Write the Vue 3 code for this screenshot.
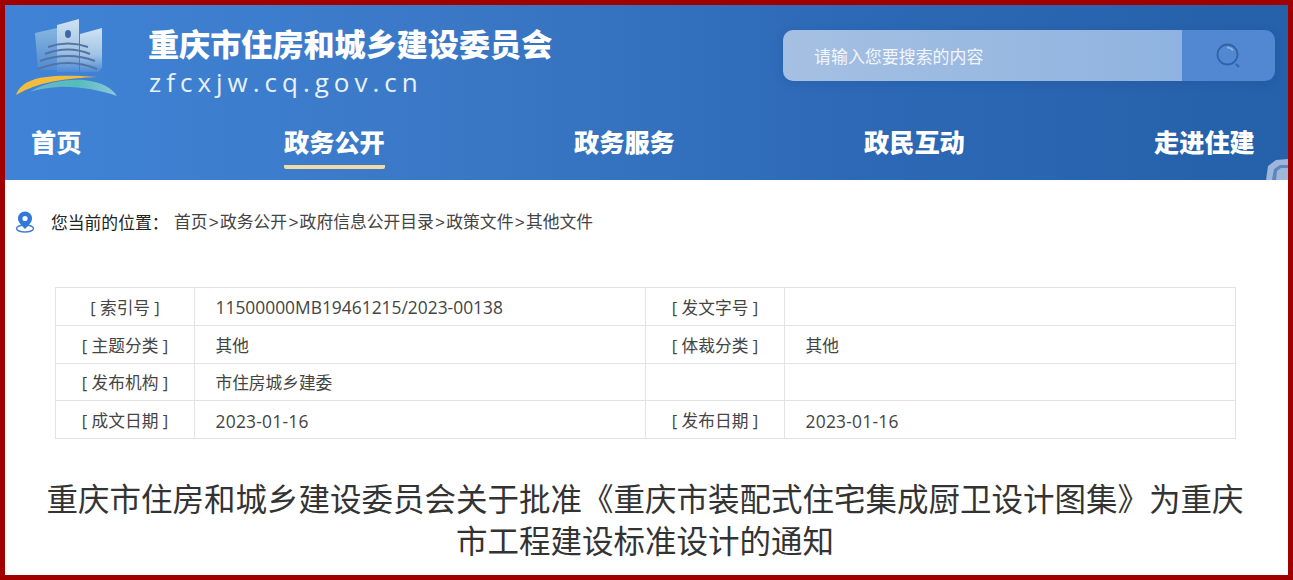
<script setup>
const nav = [
  { t: '首页' },
  { t: '政务公开', active: true },
  { t: '政务服务' },
  { t: '政民互动' },
  { t: '走进住建' }
]
const crumbs = ['首页', '政务公开', '政府信息公开目录', '政策文件', '其他文件']
const rows = [
  ['[ 索引号 ]', '11500000MB19461215/2023-00138', '[ 发文字号 ]', ''],
  ['[ 主题分类 ]', '其他', '[ 体裁分类 ]', '其他'],
  ['[ 发布机构 ]', '市住房城乡建委', '', ''],
  ['[ 成文日期 ]', '2023-01-16', '[ 发布日期 ]', '2023-01-16']
]
const valueClass = (s) => ({ latin: /^\d/.test(s), date: /^\d{4}-/.test(s) })
</script>

<template>
  <div class="frame">
    <header class="header">
      <div class="top">
        <svg class="logo" width="104" height="80" viewBox="0 0 104 80">
          <defs>
            <linearGradient id="bld" x1="0" y1="0" x2="0" y2="1">
              <stop offset="0" stop-color="#cfe2f2" />
              <stop offset="0.6" stop-color="#a3c4e6" />
              <stop offset="1" stop-color="#4f8bd6" />
            </linearGradient>
            <linearGradient id="bld2" x1="0" y1="0" x2="0" y2="1">
              <stop offset="0" stop-color="#86b6de" />
              <stop offset="1" stop-color="#4f8ad4" />
            </linearGradient>
            <linearGradient id="teal" x1="0" y1="0" x2="1" y2="0">
              <stop offset="0" stop-color="#6fb6c8" />
              <stop offset="0.55" stop-color="#55bcbc" />
              <stop offset="1" stop-color="#8fc8dc" />
            </linearGradient>
          </defs>
          <path d="M21 15 L43 10 V52 H24 Z" fill="url(#bld2)" />
          <path d="M43 7 L65 1 V54 H43 Z" fill="url(#bld)" />
          <path d="M66 16 L88 10 V50 L84 54 H66 Z" fill="url(#bld)" />
          <ellipse cx="54" cy="16" rx="3" ry="4" fill="#3c67a8" />
          <g fill="none" stroke="#54749f" stroke-width="2">
            <path d="M34 29 Q54 22 74 29" />
            <path d="M31 36 Q54 27 76 36" />
            <path d="M26 43 Q54 33 81 43" />
            <path d="M24 51 Q54 39 83 51" />
          </g>
          <path d="M2 77 C8 60 30 55 83 59 C52 60 24 64 2 77 Z" fill="#f2bd3c" />
          <path d="M16 74 C30 65 50 61 70 62 C88 64 98 70 103 78 C86 72 62 68 44 69 C34 70 24 71 16 74 Z" fill="url(#teal)" />
        </svg>
        <div class="brand">
          <h1>重庆市住房和城乡建设委员会</h1>
          <p>zfcxjw.cq.gov.cn</p>
        </div>
        <div class="search">
          <div class="input">请输入您要搜索的内容</div>
          <div class="btn">
            <svg width="26" height="26" viewBox="0 0 26 26" fill="none">
              <circle cx="11.5" cy="11.5" r="10" stroke="#2f64a8" stroke-width="1.8" />
              <path d="M11 4.5 Q15 4.5 17 7.5" stroke="#8fb3e0" stroke-width="1.4" />
              <path d="M20 21 L23 24" stroke="#2f64a8" stroke-width="1.8" />
            </svg>
          </div>
        </div>
      </div>
      <nav class="nav">
        <a v-for="n in nav" :key="n.t" :class="{ active: n.active }"><span>{{ n.t }}</span></a>
      </nav>
      <svg class="deco" width="22" height="21" viewBox="0 0 22 21">
        <path d="M0 21 L2 7 L10 1 L22 0 V21 Z" fill="#9db6da" />
        <path d="M6 21 L8 10 L14 6 L22 6 V9 L15 9 L11 12 L10 21 Z" fill="#5f86bc" />
      </svg>
    </header>

    <div class="crumb">
      <svg width="20" height="22" viewBox="0 0 20 22">
        <ellipse cx="10" cy="17.5" rx="8.5" ry="3.5" fill="none" stroke="#3f7fd0" stroke-width="1.5" />
        <path d="M10 18 C6 14 3 11 3 7.5 A7 7 0 0 1 17 7.5 C17 11 14 14 10 18 Z" fill="#2f78dc" />
        <circle cx="10" cy="7.5" r="2.6" fill="#fff" />
      </svg>
      <span class="here">您当前的位置：</span>
      <span class="path">
        <template v-for="(c, i) in crumbs" :key="c"><i v-if="i" class="sep">&gt;</i>{{ c }}</template>
      </span>
    </div>

    <table class="meta">
      <colgroup>
        <col class="c1" /><col class="c2" /><col class="c1" /><col />
      </colgroup>
      <tbody>
        <tr v-for="(r, i) in rows" :key="i">
          <td class="k">{{ r[0] }}</td>
          <td class="v" :class="valueClass(r[1])">{{ r[1] }}</td>
          <td class="k">{{ r[2] }}</td>
          <td class="v" :class="valueClass(r[3])">{{ r[3] }}</td>
        </tr>
      </tbody>
    </table>

    <h2 class="title">重庆市住房和城乡建设委员会关于批准《重庆市装配式住宅集成厨卫设计图集》为重庆市工程建设标准设计的通知</h2>
  </div>
</template>

<style>
html, body { margin: 0; background: #fff; }
</style>

<style scoped>
.frame {
  box-sizing: border-box;
  width: 1293px;
  height: 580px;
  border: 5px solid #a00000;
  overflow: hidden;
  background: #fff;
  font-family: "Noto Sans CJK SC", "Noto Sans", sans-serif;
  color: #333;
}
.header {
  position: relative;
  height: 175px;
  background: linear-gradient(90deg, #4083d6 0%, #3a78c6 35%, #2d69b6 65%, #2560aa 100%);
  color: #fff;
}
.top {
  display: flex;
  align-items: flex-start;
  height: 110px;
  padding: 13px 13px 0 9px;
  box-sizing: border-box;
}
.logo { flex: none; }
.brand { margin-left: 30px; }
.brand h1 {
  margin: 3px 0 0;
  font-size: 31.1px;
  line-height: 44px;
  font-weight: 900;
  white-space: nowrap;
}
.brand p {
  margin: 0;
  padding-left: 1px;
  font-family: "Open Sans", sans-serif;
  font-size: 26px;
  line-height: 35px;
  letter-spacing: 5px;
  white-space: nowrap;
  color: #e8f1fb;
}
.search {
  display: flex;
  margin: 12px 0 0 auto;
  width: 492px;
  height: 51px;
  border-radius: 10px;
  overflow: hidden;
  box-shadow: 0 2px 8px rgba(30, 70, 130, 0.25);
}
.input {
  width: 399px;
  padding-left: 31px;
  box-sizing: border-box;
  background: linear-gradient(90deg, #a5c0e2 0%, #8fb3e0 100%);
  font-size: 16.95px;
  line-height: 51px;
  color: #f2f6fc;
}
.btn {
  flex: 1;
  display: flex;
  align-items: center;
  justify-content: center;
  background: #5288d2;
}
.nav {
  display: grid;
  grid-template-columns: 253px 290px 290px 290px auto;
  padding-left: 26px;
  font-size: 25.2px;
  font-weight: 900;
}
.nav a { justify-self: start; }
.nav span {
  display: block;
  height: 54px;
  line-height: 52px;
  box-sizing: border-box;
}
.nav .active span { border-bottom: 4px solid #f0dba8; border-radius: 0 0 2px 2px; }
.deco { position: absolute; right: 0; bottom: 0; }
.crumb {
  display: flex;
  align-items: center;
  height: 24px;
  margin: 30px 0 0 10px;
  font-size: 16.8px;
  line-height: 24px;
  white-space: nowrap;
}
.here { margin-left: 16px; color: #222; width: 123px; }
.path { color: #444; }
.sep {
  font-style: normal;
  font-family: "Liberation Sans", sans-serif;
  font-size: 17px;
  margin: 0 1.25px;
}
.meta {
  width: 1181px;
  margin: 53px 0 0 50px;
  border-collapse: collapse;
  table-layout: fixed;
  font-family: "Open Sans", "Noto Sans CJK SC", sans-serif;
  font-size: 16.7px;
  color: #444;
}
.c1 { width: 139px; }
.c2 { width: 451px; }
.meta td {
  height: 37.8px;
  padding: 3px 0 0;
  border: 1px solid #e3e3e3;
  line-height: 24px;
  box-sizing: border-box;
}
.k { text-align: center; }
.meta .v { padding-left: 20.5px; }
.meta .latin { font-size: 17.4px; padding-top: 2px; }
.meta .date { letter-spacing: 0.25px; }
.title {
  width: 1200px;
  margin: 37px 0 0 40px;
  font-size: 31.5px;
  line-height: 42px;
  font-weight: 400;
  text-align: center;
  color: #333;
}
</style>
